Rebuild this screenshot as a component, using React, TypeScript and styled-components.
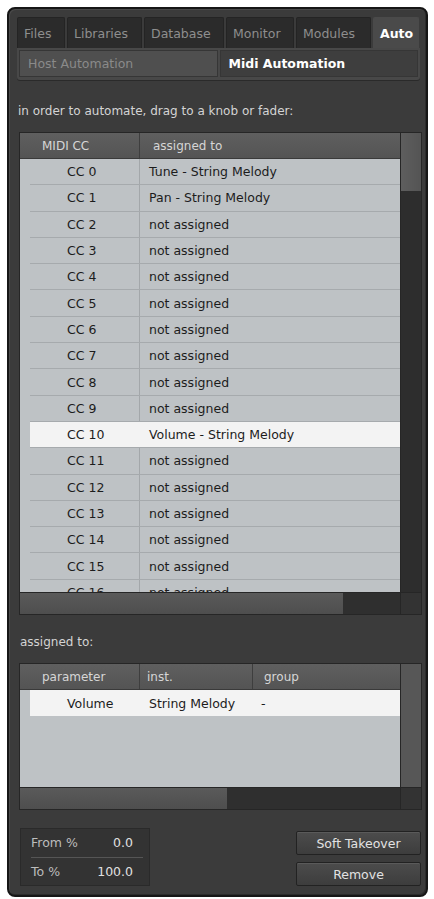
import styled, { createGlobalStyle } from "styled-components";

const GlobalStyle = createGlobalStyle`
  body {
    margin: 0;
    background: #ffffff;
    font-family: "DejaVu Sans", Verdana, sans-serif;
  }
`;

const tabs = [
  { label: "Files", width: 48 },
  { label: "Libraries", width: 75 },
  { label: "Database", width: 80 },
  { label: "Monitor", width: 68 },
  { label: "Modules", width: 75 },
  { label: "Auto", width: 46, active: true },
];

// only CC 0..16 fit in the list, the last one is cut by the scrollbar
const ccRows = Array.from({ length: 17 }, (_, i) => {
  const assigned: Record<number, string> = {
    0: "Tune - String Melody",
    1: "Pan - String Melody",
    10: "Volume - String Melody",
  };
  return { cc: `CC ${i}`, to: assigned[i] ?? "not assigned", selected: i === 10 };
});

const App = () => {
  return (
    <>
      <GlobalStyle />
      <Panel>
        <TabRow>
          {tabs.map((t) => (
            <Tab key={t.label} $width={t.width} $active={t.active}>
              {t.label}
            </Tab>
          ))}
        </TabRow>
        <SubBar>
          <SubTab>Host Automation</SubTab>
          <SubTab $active>Midi Automation</SubTab>
        </SubBar>

        <Hint>in order to automate, drag to a knob or fader:</Hint>

        <TableFrame $height={483}>
          <ListArea>
            <HeaderRow $cols="120px 1fr">
              <HeadCell $pad={22}>MIDI CC</HeadCell>
              <HeadCell $pad={13}>assigned to</HeadCell>
            </HeaderRow>
            <CcList>
              {ccRows.map((r) => (
                <CcRow key={r.cc} $selected={r.selected}>
                  <CcCell>{r.cc}</CcCell>
                  <ToCell>{r.to}</ToCell>
                </CcRow>
              ))}
            </CcList>
          </ListArea>
          <VScroll>
            <VThumb $height={58} />
          </VScroll>
          <HScroll>
            <HThumb $width={323} />
          </HScroll>
          <Corner />
        </TableFrame>

        <Label>assigned to:</Label>

        <TableFrame $height={147}>
          <ListArea>
            <HeaderRow $cols="120px 113px 1fr">
              <HeadCell $pad={22}>parameter</HeadCell>
              <HeadCell $pad={7}>inst.</HeadCell>
              <HeadCell $pad={11}>group</HeadCell>
            </HeaderRow>
            <AssignList>
              <AssignRow>
                <span>Volume</span>
                <span>String Melody</span>
                <span>-</span>
              </AssignRow>
            </AssignList>
          </ListArea>
          <VScroll $light />
          <HScroll>
            <HThumb $width={207} />
          </HScroll>
          <Corner />
        </TableFrame>

        <Footer>
          <RangeBox>
            <RangeRow>
              <span>From %</span>
              <span>0.0</span>
            </RangeRow>
            <RangeRow $last>
              <span>To %</span>
              <span>100.0</span>
            </RangeRow>
          </RangeBox>
          <Buttons>
            <Button>Soft Takeover</Button>
            <Button>Remove</Button>
          </Buttons>
        </Footer>
      </Panel>
    </>
  );
};

export default App;

const Panel = styled.div`
  box-sizing: border-box;
  margin: 7px 0 0 7px;
  width: 421px;
  height: 890px;
  border: 2px solid #161616;
  border-radius: 8px;
  background: #3b3b3b;
  box-shadow: inset 1px 1px 0 #4a4a4a, inset -1px -1px 0 #2c2c2c;
  padding: 8px 6px 8px 8px;
  display: flex;
  flex-direction: column;
`;

const TabRow = styled.div`
  display: flex;
  gap: 2px;
  height: 31px;
`;

const Tab = styled.div<{ $width: number; $active?: boolean }>`
  box-sizing: border-box;
  width: ${(p) => p.$width}px;
  padding: 0 0 0 6px;
  display: flex;
  align-items: center;
  font-size: 12.5px;
  color: ${(p) => (p.$active ? "#ffffff" : "#8e8e8e")};
  font-weight: ${(p) => (p.$active ? "bold" : "normal")};
  background: ${(p) => (p.$active ? "#4a4a4a" : "#2b2b2b")};
  border: 1px solid ${(p) => (p.$active ? "#4a4a4a" : "#242424")};
  border-bottom: none;
  border-radius: 2px 2px 0 0;
`;

const SubBar = styled.div`
  display: flex;
  gap: 2px;
  height: 32px;
  box-sizing: border-box;
  padding: 2px 2px 3px;
  background: #484848;
  border-radius: 0 0 3px 3px;
  box-shadow: 0 1px 0 #2a2a2a;
`;

const SubTab = styled.div<{ $active?: boolean }>`
  flex: 1;
  display: flex;
  align-items: center;
  padding-left: 8px;
  font-size: 12.5px;
  color: ${(p) => (p.$active ? "#ffffff" : "#8a8a8a")};
  font-weight: ${(p) => (p.$active ? "bold" : "normal")};
  background: ${(p) => (p.$active ? "#3e3e3e" : "#4f4f4f")};
  border: 1px solid #363636;
`;

const Hint = styled.div`
  margin-top: 23px;
  line-height: 16px;
  font-size: 12px;
  color: #d4d4d4;
  padding-left: 1px;
`;

const Label = styled(Hint)`
  margin-top: 19px;
  padding-left: 3px;
`;

const TableFrame = styled.div<{ $height: number }>`
  box-sizing: border-box;
  margin: 13px 0 0 2px;
  width: 403px;
  height: ${(p) => p.$height}px;
  display: grid;
  grid-template-columns: 1fr 21px;
  grid-template-rows: 1fr 22px;
  border: 1px solid #262626;
  background: #2e2e2e;
  ${Label} + & {
    margin-top: 13px;
  }
`;

const ListArea = styled.div`
  display: flex;
  flex-direction: column;
  min-height: 0;
  overflow: hidden;
  background: #bec2c5;
`;

const HeaderRow = styled.div<{ $cols: string }>`
  display: grid;
  grid-template-columns: ${(p) => p.$cols};
  height: 25px;
  flex-shrink: 0;
  background: linear-gradient(#5f5f5f, #545454);
  border-bottom: 1px solid #3a3a3a;
`;

const HeadCell = styled.div<{ $pad: number }>`
  display: flex;
  align-items: center;
  padding-left: ${(p) => p.$pad}px;
  font-size: 12px;
  color: #d6d6d6;
  border-right: 1px solid #3e3e3e;
  &:last-child {
    border-right: none;
  }
`;

const CcList = styled.div`
  flex: 1;
  overflow: hidden;
  padding-left: 10px;
  background: linear-gradient(90deg, transparent 119px, #a3a7aa 119px, #a3a7aa 120px, transparent 120px);
`;

const CcRow = styled.div<{ $selected?: boolean }>`
  box-sizing: border-box;
  height: 26.3px;
  display: grid;
  grid-template-columns: 110px 1fr;
  align-items: center;
  font-size: 12.5px;
  color: #1c1c1c;
  background: ${(p) => (p.$selected ? "#f3f3f3" : "transparent")};
  border-bottom: 1px solid #a6aaad;
`;

const CcCell = styled.div`
  padding-left: 37px;
`;

const ToCell = styled.div`
  padding-left: 9px;
`;

const AssignList = styled.div`
  flex: 1;
  padding-left: 10px;
`;

const AssignRow = styled.div`
  height: 26px;
  display: grid;
  grid-template-columns: 110px 113px 1fr;
  align-items: center;
  font-size: 12.5px;
  color: #1c1c1c;
  background: #f3f3f3;
  & > span:first-child {
    padding-left: 37px;
  }
  & > span:nth-child(2) {
    padding-left: 9px;
  }
  & > span:nth-child(3) {
    padding-left: 8px;
  }
`;

const VScroll = styled.div<{ $light?: boolean }>`
  background: ${(p) => (p.$light ? "#575757" : "#2d2d2d")};
  border-left: 1px solid #262626;
  overflow: hidden;
`;

const VThumb = styled.div<{ $height: number }>`
  height: ${(p) => p.$height}px;
  background: linear-gradient(90deg, #5e5e5e, #545454);
`;

const HScroll = styled.div`
  background: #2f2f2f;
  border-top: 1px solid #262626;
`;

const HThumb = styled.div<{ $width: number }>`
  width: ${(p) => p.$width}px;
  height: 100%;
  background: linear-gradient(#5a5a5a, #4e4e4e);
`;

const Corner = styled.div`
  background: #333333;
  border-top: 1px solid #262626;
  border-left: 1px solid #262626;
`;

const Footer = styled.div`
  margin-top: 18px;
  display: flex;
  justify-content: space-between;
  align-items: flex-end;
  padding-left: 3px;
`;

const RangeBox = styled.div`
  box-sizing: border-box;
  width: 130px;
  height: 58px;
  background: #333333;
  border: 1px solid #2a2a2a;
  display: flex;
  flex-direction: column;
  padding: 0 6px 0 10px;
`;

const RangeRow = styled.div<{ $last?: boolean }>`
  flex: 1;
  display: flex;
  align-items: center;
  justify-content: space-between;
  font-size: 12.5px;
  color: #bdbdbd;
  border-bottom: ${(p) => (p.$last ? "none" : "1px solid #555555")};
  & > span:last-child {
    color: #e0e0e0;
    padding-right: 10px;
  }
`;

const Buttons = styled.div`
  display: flex;
  flex-direction: column;
  gap: 7px;
  margin-right: -1px;
`;

const Button = styled.button`
  box-sizing: border-box;
  width: 125px;
  height: 24px;
  background: linear-gradient(#4c4c4c, #3d3d3d);
  border: 1px solid #222222;
  border-radius: 2px;
  box-shadow: inset 0 1px 0 #5a5a5a;
  color: #e2e2e2;
  font-family: "DejaVu Sans", Verdana, sans-serif;
  font-size: 12.5px;
  padding: 0;
  cursor: pointer;
`;
